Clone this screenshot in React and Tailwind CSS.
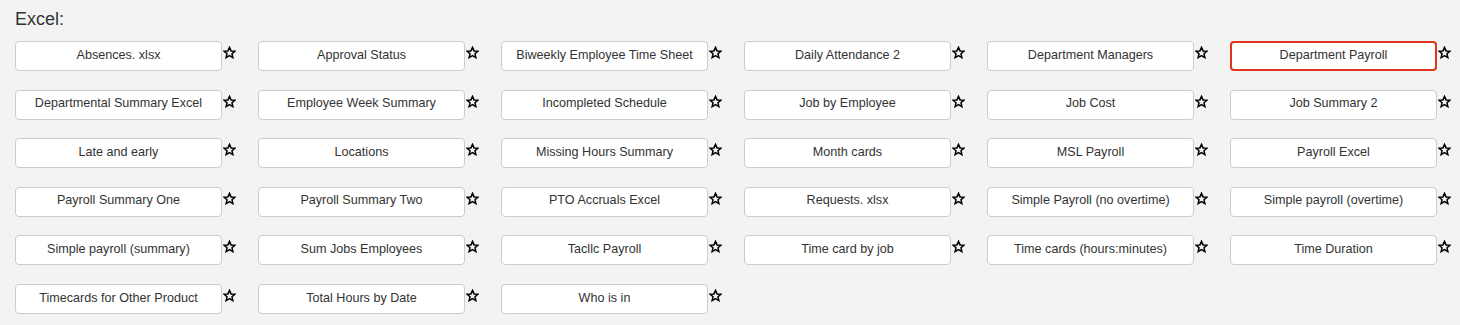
const reports = [
  "Absences. xlsx",
  "Approval Status",
  "Biweekly Employee Time Sheet",
  "Daily Attendance 2",
  "Department Managers",
  "Department Payroll",
  "Departmental Summary Excel",
  "Employee Week Summary",
  "Incompleted Schedule",
  "Job by Employee",
  "Job Cost",
  "Job Summary 2",
  "Late and early",
  "Locations",
  "Missing Hours Summary",
  "Month cards",
  "MSL Payroll",
  "Payroll Excel",
  "Payroll Summary One",
  "Payroll Summary Two",
  "PTO Accruals Excel",
  "Requests. xlsx",
  "Simple Payroll (no overtime)",
  "Simple payroll (overtime)",
  "Simple payroll (summary)",
  "Sum Jobs Employees",
  "Tacllc Payroll",
  "Time card by job",
  "Time cards (hours:minutes)",
  "Time Duration",
  "Timecards for Other Product",
  "Total Hours by Date",
  "Who is in",
];

const Star = () => (
  <svg width="13" height="13" viewBox="0 0 24 24" className="ml-[1px] mt-[5px]">
    <path
      d="M12 2.5l2.9 6.6 7.1.6-5.4 4.7 1.6 7-6.2-3.7-6.2 3.7 1.6-7L2 9.7l7.1-.6z"
      fill="none"
      stroke="#000"
      strokeWidth="2.8"
      strokeLinejoin="miter"
    />
  </svg>
);

const App = () => {
  const selected = "Department Payroll";

  return (
    <div className="min-h-[325px] bg-[#f3f3f3] px-[15px] pt-[8px] font-['Liberation_Sans',Arial,sans-serif] text-[#333]">
      <h2 className="text-[18px] leading-[22px] mb-[11px]">Excel:</h2>

      <div className="grid grid-cols-[repeat(6,243px)] gap-y-[18.6px]">
        {reports.map((name) => (
          <div key={name} className="flex items-start">
            <button
              className={
                name === selected
                  ? "w-[207px] h-[30px] pb-[2px] bg-white rounded-[4px] border-2 border-[#e0341e] text-[12.6px] text-[#333]"
                  : "w-[207px] h-[30px] pb-[2px] bg-white rounded-[4px] border border-[#cccccc] text-[12.6px] text-[#333]"
              }
            >
              {name}
            </button>
            <Star />
          </div>
        ))}
      </div>
    </div>
  );
};

export default App;
